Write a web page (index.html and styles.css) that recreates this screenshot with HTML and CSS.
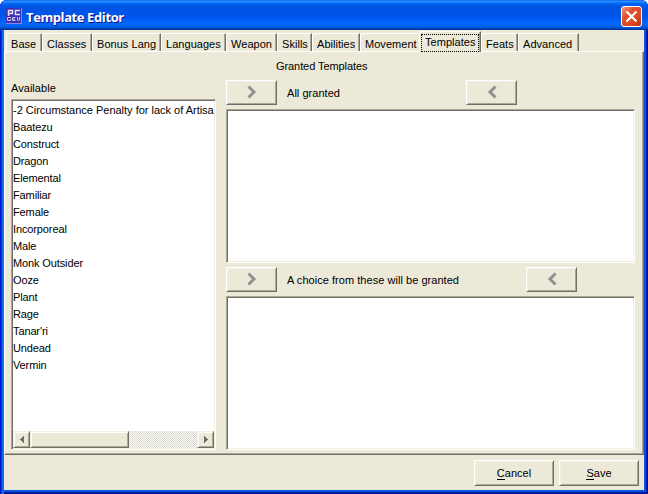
FILE: index.html
```html
<!DOCTYPE html>
<html lang="en">
<head>
<meta charset="utf-8">
<title>Template Editor</title>
<link rel="stylesheet" href="styles.css">
</head>
<body>
<div class="window">
  <header class="titlebar">
    <svg class="app-icon" width="16" height="16" viewBox="0 0 16 16">
      <rect width="16" height="16" fill="#3a32b4"/>
      <path d="M0 15.5h16M15.5 0v16" stroke="#8f86dc"/>
      <path d="M2.500 8V2.500H6.500V5.500H3M14 2.500H9.500V6.500H14" fill="none" stroke="#e4dcf4" stroke-width="1.500"/>
      <path d="M5 9.500H1.500V12.500H4.500V11M9.500 9.500H6.500V12.500H9.500M7 11h2M11.500 9v3l1 1 1-1v-3" fill="none" stroke="#c9c0ec"/>
    </svg>
    <h1 class="title">Template Editor</h1>
    <button class="close" aria-label="Close"><svg width="13" height="13" viewBox="0 0 13 13"><path d="M1.500 1.500l10 10M11.500 1.500l-10 10" stroke="#fff" stroke-width="2.200"/></svg></button>
  </header>
  <main class="client">
    <nav class="tabs">
      <span class="tab base">Base</span><span class="tab classes">Classes</span><span class="tab bonus">Bonus Lang</span><span class="tab languages">Languages</span><span class="tab weapon">Weapon</span><span class="tab skills">Skills</span><span class="tab abilities">Abilities</span><span class="tab movement">Movement</span><span class="tab templates selected"><span class="focus">Templates</span></span><span class="tab feats">Feats</span><span class="tab advanced">Advanced</span>
    </nav>
    <section class="panel">
      <h2 class="heading">Granted Templates</h2>
      <div class="available">
        <div class="label">Available</div>
        <div class="sunken list">
          <ul class="items">
            <li class="long">-2 Circumstance Penalty for lack of Artisa</li><li>Baatezu</li><li>Construct</li><li>Dragon</li><li>Elemental</li><li>Familiar</li><li>Female</li><li>Incorporeal</li><li>Male</li><li>Monk Outsider</li><li>Ooze</li><li>Plant</li><li>Rage</li><li>Tanar'ri</li><li>Undead</li><li>Vermin</li>
          </ul>
          <div class="scrollbar">
            <span class="arrow"><svg width="4" height="7" viewBox="0 0 4 7" shape-rendering="crispEdges"><path d="M4 0v7L0 3.500z"/></svg></span>
            <span class="thumb"></span>
            <span class="track"></span>
            <span class="arrow"><svg width="4" height="7" viewBox="0 0 4 7" shape-rendering="crispEdges"><path d="M0 0v7l4-3.500z"/></svg></span>
          </div>
        </div>
      </div>
      <div class="granted">
        <div class="controls">
          <button class="btn move"><svg width="10" height="14" viewBox="0 0 10 14"><path d="M1.500 1.500L7 7l-5.500 5.500"/></svg></button>
          <span class="caption all">All granted</span>
          <button class="btn move"><svg width="10" height="14" viewBox="0 0 10 14"><path d="M8.500 1.500L3 7l5.500 5.500"/></svg></button>
        </div>
        <div class="sunken"></div>
        <div class="controls">
          <button class="btn move"><svg width="10" height="14" viewBox="0 0 10 14"><path d="M1.500 1.500L7 7l-5.500 5.500"/></svg></button>
          <span class="caption choice">A choice from these will be granted</span>
          <button class="btn move"><svg width="10" height="14" viewBox="0 0 10 14"><path d="M8.500 1.500L3 7l5.500 5.500"/></svg></button>
        </div>
        <div class="sunken"></div>
      </div>
    </section>
    <footer class="actions">
      <button class="btn action"><span class="key">C</span>ancel</button>
      <button class="btn action"><span class="key">S</span>ave</button>
    </footer>
  </main>
</div>
</body>
</html>
```

FILE: styles.css
```css
* { box-sizing: border-box; }
body { margin: 0; background: #fff; font: 11px/17px "Liberation Sans", Arial, sans-serif; letter-spacing: .04px; color: #000; }
button { font: inherit; letter-spacing: inherit; color: inherit; padding: 0; }
.window { width: 648px; height: 494px; display: flex; flex-direction: column; padding: 0 4px 4px; border-radius: 7px 7px 0 0; background: #0831d9; box-shadow: inset 1px 0 #0019cf, inset 2px 0 #0831d9, inset 4px 0 #166aee, inset -1px -1px #00138c, inset -2px -2px #001ea0, inset -4px -4px #0855dd; overflow: hidden; }
.titlebar { height: 30px; margin: 0 -4px; padding: 3px 6px 0 6px; display: flex; align-items: center; background: linear-gradient(#0058ee 0, #3593ff 4%, #288eff 6%, #127dff 8%, #036ffc 10%, #0262ee 14%, #0057e5 20%, #0054e3 24%, #0055eb 56%, #005bf5 66%, #026afe 76%, #0062ef 88%, #0052d6 92%, #0040ab 96%, #003092 100%); }
.app-icon { margin-top: -1px; }
.title { margin: 0 auto 0 4px; font: bold 13px/20px "Open Sans", sans-serif; letter-spacing: -.4px; color: #fff; text-shadow: 1px 1px #0f1089; }
.close { width: 21px; height: 21px; display: flex; align-items: center; justify-content: center; border: 1px solid #fff; border-radius: 3px; background: linear-gradient(135deg, #ee9880, #e0502c 35%, #dc4820 70%, #b83010); margin-top: -1px; }
.client { flex: 1; display: flex; flex-direction: column; background: #ece9d8; }
.tabs { height: 21px; display: flex; align-items: flex-end; padding-left: 2px; }
.tab { height: 18px; padding: 2px 0 0 4px; line-height: 17px; white-space: nowrap; border-top: 1px solid #fff; border-left: 1px solid #fff; border-right: 1px solid #716f64; border-radius: 2px 1px 0 0; box-shadow: inset -1px 0 #aca899; }
.base { width: 36px; } .classes { width: 50px; } .bonus { width: 69px; }
.languages { width: 65px; } .weapon { width: 51px; } .skills { width: 35px; }
.abilities { width: 48px; } .movement { width: 59px; border-right: 0; box-shadow: none; }
.templates { width: 62px; } .feats { width: 37px; } .advanced { width: 61px; }
.selected { z-index: 1; height: 21px; padding: 2px 0 0 1px; margin-bottom: -1px; background: #ece9d8; position: relative; }
.focus { display: block; width: 58px; height: 18px; border: 1px dotted #000; padding-left: 3px; line-height: 15px; }
.panel { height: 404px; position: relative; display: grid; grid-template: 28px 370px / 205px 409px; column-gap: 10px; padding: 0 0 0 6px; border: 1px solid #fff; border-right: 1px solid #716f64; border-bottom: 1px solid #716f64; box-shadow: inset -1px -1px #aca899; }
.heading { grid-column: 1 / -1; margin: 6px 0 0 265px; font: inherit; letter-spacing: -.08px; }
.available { display: flex; flex-direction: column; margin-top: -1px; }
.label { height: 20px; line-height: 19px; }
.sunken { background: #fff; border: 1px solid; border-color: #aca899 #fff #fff #aca899; box-shadow: inset 1px 1px #716f64, inset -1px -1px #f1efe2; }
.list { height: 351px; padding: 1px; display: flex; flex-direction: column; justify-content: space-between; }
.items { list-style: none; margin: 0; padding: 1px 0 0; white-space: nowrap; letter-spacing: -.12px; }
.long { letter-spacing: -.01px; }
.scrollbar { height: 17px; display: flex; }
.arrow, .thumb { background: #ece9d8; border: 1px solid; border-color: #f1efe2 #716f64 #716f64 #f1efe2; box-shadow: inset 1px 1px #fff, inset -1px -1px #aca899; }
.arrow { width: 17px; display: flex; align-items: center; justify-content: center; fill: #716f64; }
.thumb { width: 99px; }
.track { flex: 1; background: repeating-conic-gradient(#fff 0 25%, #d8d5c9 0 50%) 0 0 / 2px 2px; }
.granted { display: grid; grid-template-rows: 25px 154px 25px 154px; row-gap: 4px; }
.controls { display: flex; }
.btn { background: #ece9d8; border: 1px solid; border-color: #fff #716f64 #716f64 #fff; box-shadow: inset 1px 1px #f1efe2, inset -1px -1px #aca899; }
.move { width: 51px; height: 25px; display: flex; align-items: center; justify-content: center; }
.move svg { fill: none; stroke: #919191; stroke-width: 3; margin-top: -2px; }
.caption { margin-left: 10px; line-height: 27px; white-space: nowrap; }
.all { width: 179px; } .choice { width: 239px; }
.actions { height: 35px; padding: 5px 5px 0; display: flex; justify-content: flex-end; gap: 5px; }
.action { width: 80px; height: 26px; }
.key { border-bottom: 1px solid; }
```
